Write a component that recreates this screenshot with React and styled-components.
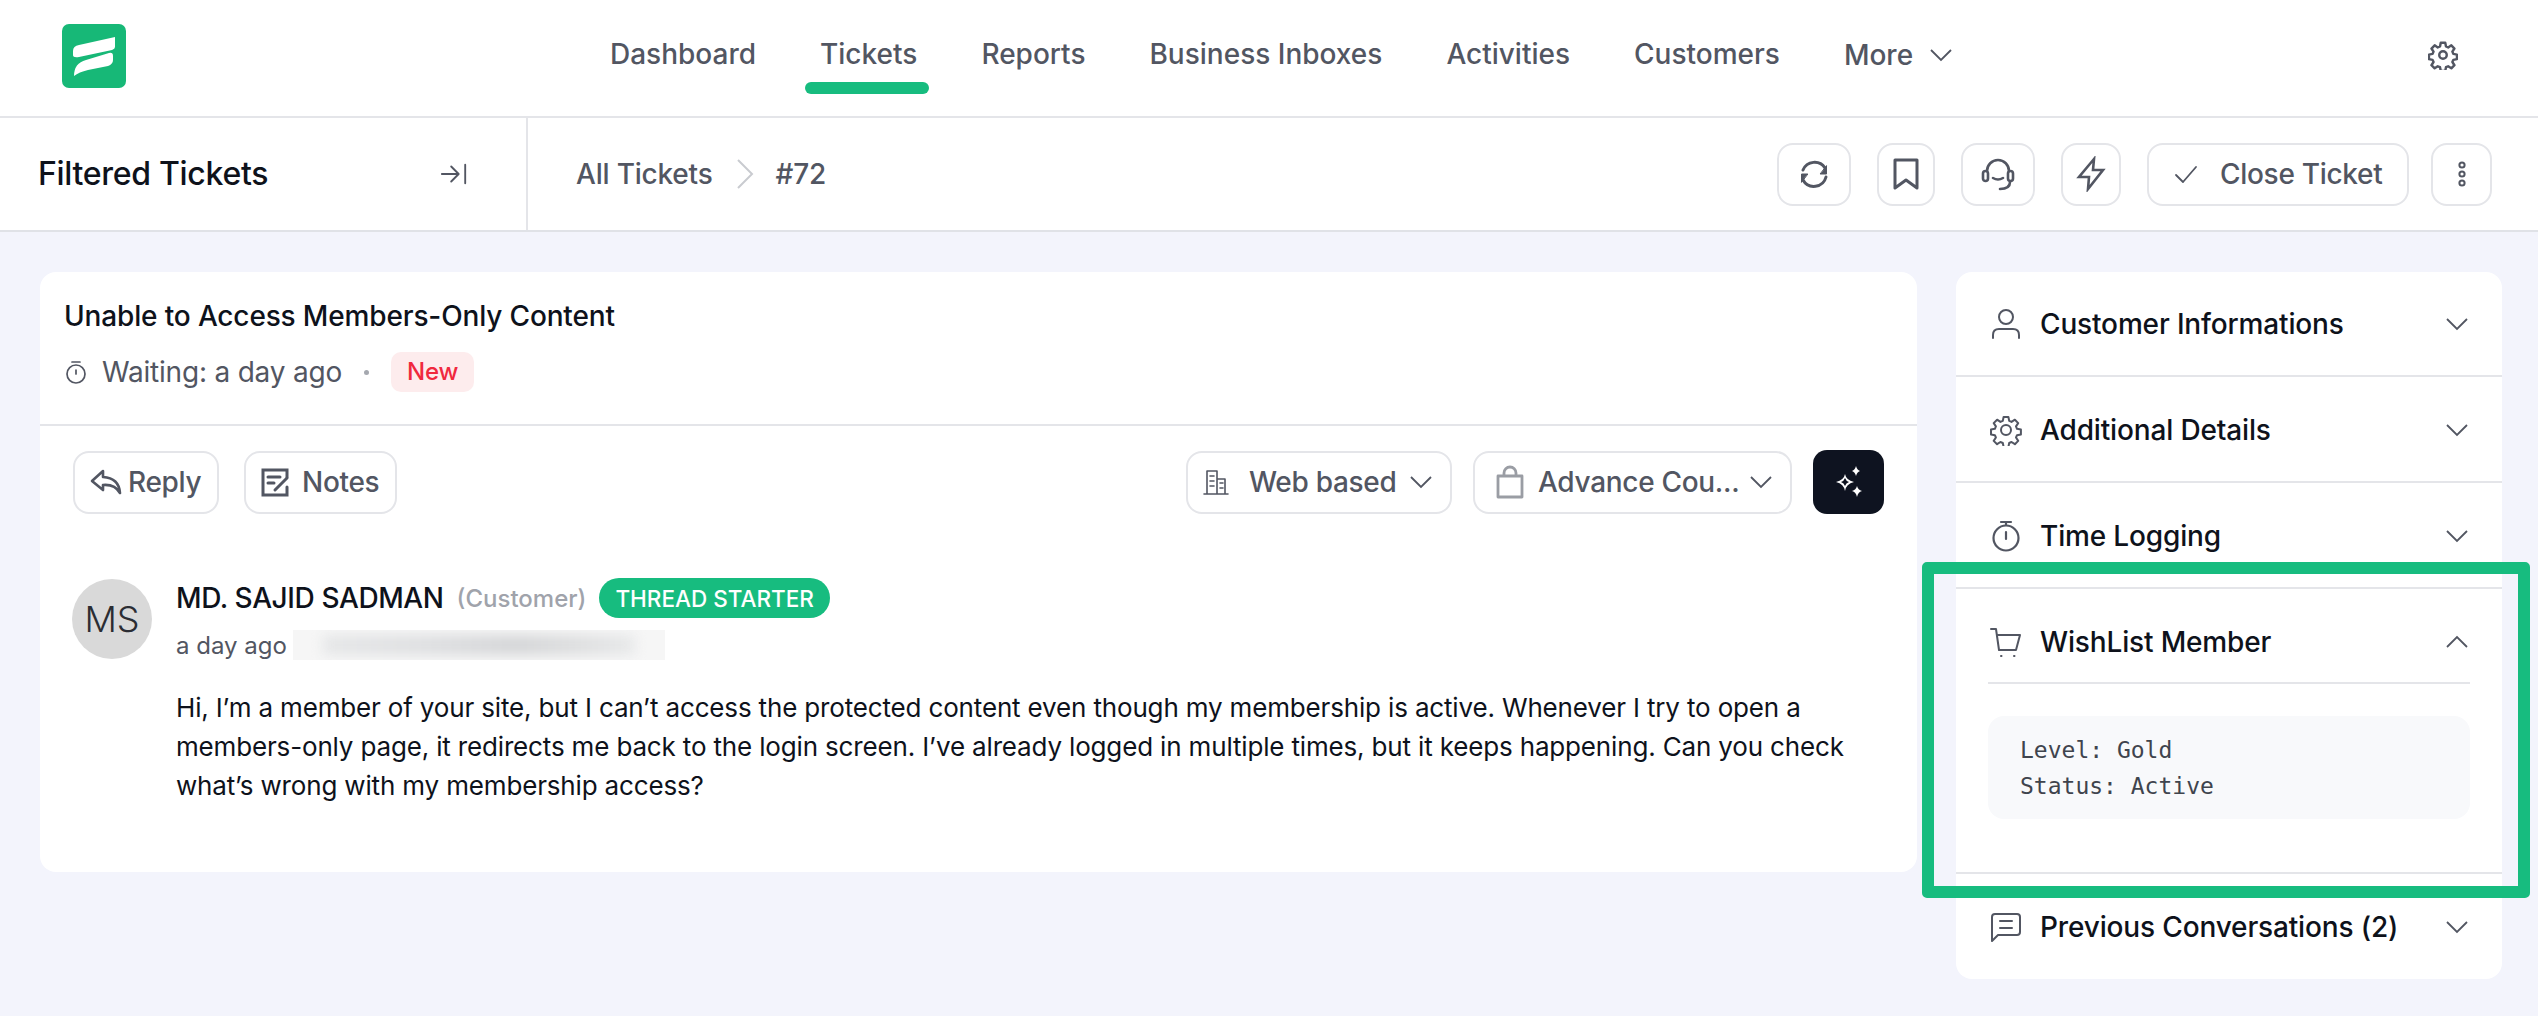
import React from "react";
import styled, { createGlobalStyle } from "styled-components";

const GlobalStyle = createGlobalStyle`
  *, *::before, *::after { box-sizing: border-box; margin: 0; padding: 0; }
  html, body { background: #f3f4fc; font-family: Inter, "Noto Sans", sans-serif; }
  #root { min-height: 1016px; }
`;

const Line = "#e4e5e9";
const Slate = "#525662";

const Page = styled.div`
  width: 2538px;
  height: 1016px;
  overflow: hidden;
  background: #f3f4fc;
`;

const TopNav = styled.header`
  height: 118px;
  background: #fff;
  border-bottom: 2px solid ${Line};
  display: flex;
  align-items: flex-start;
  padding-left: 62px;
`;

const Logo = styled.svg`
  width: 64px;
  height: 64px;
  margin-top: 24px;
  flex: none;
`;

const NavList = styled.nav`
  display: flex;
  margin-left: 468px;
  height: 116px;
`;

const NavItem = styled.a`
  position: relative;
  display: flex;
  align-items: center;
  gap: 17px;
  height: 108px;
  padding: 0 16px;
  margin-right: 32px;
  font-size: 28px;
  font-weight: 500;
  color: ${Slate};
  &::after {
    content: "";
    display: ${(p) => (p.$active ? "block" : "none")};
    position: absolute;
    left: 1px;
    right: 4px;
    top: 82px;
    height: 12px;
    border-radius: 6px;
    background: #17bc7f;
  }
`;

const MoreItem = styled(NavItem)`
  padding-top: 2px;
`;

const GearLink = styled.a`
  margin-left: auto;
  margin-right: 80px;
  margin-top: 40px;
  color: ${Slate};
  display: flex;
`;

const SubBar = styled.div`
  height: 114px;
  background: #fff;
  border-bottom: 2px solid #e0e2e7;
  display: flex;
`;

const FilterPane = styled.div`
  width: 528px;
  flex: none;
  border-right: 2px solid ${Line};
  display: flex;
  align-items: center;
  justify-content: space-between;
  padding: 0 58px 0 38px;
  color: ${Slate};
`;

const FilterTitle = styled.h2`
  font-size: 32px;
  line-height: 40px;
  font-weight: 500;
  letter-spacing: -0.3px;
  color: #0e121b;
`;

const Crumbs = styled.div`
  flex: 1;
  display: flex;
  align-items: center;
  padding-left: 48px;
  font-size: 28px;
  font-weight: 500;
  letter-spacing: -0.2px;
  color: ${Slate};
  gap: 24px;
`;

const CrumbSep = styled.svg`
  width: 20px;
  height: 32px;
  margin: 0 -3px 0 -2px;
  color: #c9cbd0;
`;

const Actions = styled.div`
  display: flex;
  align-items: center;
  gap: 26px;
  padding-right: 46px;
`;

const IconButton = styled.button`
  width: ${(p) => p.$w}px;
  height: 63px;
  border: 2px solid ${Line};
  border-radius: 16px;
  background: #fff;
  color: ${Slate};
  display: flex;
  align-items: center;
  justify-content: center;
  font: inherit;
`;

const CloseButton = styled(IconButton)`
  font-size: 28px;
  font-weight: 500;
  letter-spacing: -0.3px;
  gap: 22px;
  justify-content: flex-start;
  padding-left: 25px;
`;

const DotsButton = styled(IconButton)`
  margin-left: -4px;
`;

const Content = styled.main`
  display: flex;
  align-items: flex-start;
  padding: 40px 36px 0 40px;
  gap: 39px;
`;

const TicketCard = styled.section`
  width: 1877px;
  height: 600px;
  flex: none;
  background: #fff;
  border-radius: 16px;
`;

const TicketHead = styled.div`
  height: 154px;
  border-bottom: 2px solid ${Line};
  padding: 25px 24px 0;
`;

const TicketTitle = styled.h1`
  font-size: 28px;
  line-height: 38px;
  font-weight: 500;
  letter-spacing: -0.15px;
  color: #0e121b;
`;

const MetaRow = styled.div`
  display: flex;
  align-items: center;
  margin-top: 17px;
  font-size: 28px;
  line-height: 40px;
  letter-spacing: -0.2px;
  color: ${Slate};
`;

const MetaText = styled.span`
  margin-left: 14px;
`;

const MetaDot = styled.span`
  width: 5px;
  height: 5px;
  border-radius: 50%;
  background: #a5a8af;
  margin: 0 22px;
`;

const NewBadge = styled.span`
  height: 40px;
  padding: 0 16px;
  border-radius: 10px;
  background: #fdeced;
  color: #f0293e;
  font-size: 24px;
  font-weight: 500;
  display: flex;
  align-items: center;
`;

const ToolRow = styled.div`
  display: flex;
  align-items: center;
  padding: 24px 33px 0;
  gap: 25px;
`;

const Pill = styled.button`
  height: 63px;
  width: ${(p) => p.$w}px;
  border: 2px solid ${Line};
  border-radius: 16px;
  background: #fff;
  color: ${Slate};
  font: inherit;
  font-size: 28px;
  font-weight: 500;
  letter-spacing: -0.3px;
  display: flex;
  align-items: center;
  gap: ${(p) => p.$gap || 8}px;
  padding-left: ${(p) => p.$pad || 16}px;
  white-space: nowrap;
`;

const PillLabel = styled.span`
  margin-left: ${(p) => p.$ml || 0}px;
`;

const Spacer = styled.div`
  flex: 1;
`;

const SelectRow = styled.div`
  display: flex;
  align-items: center;
  gap: 21px;
`;

const SparkButton = styled.button`
  width: 71px;
  height: 64px;
  border: none;
  border-radius: 14px;
  background: #0e1320;
  display: flex;
  align-items: center;
  justify-content: center;
`;

const Message = styled.article`
  display: flex;
  gap: 24px;
  padding: 65px 32px 0;
`;

const Avatar = styled.div`
  width: 80px;
  height: 80px;
  flex: none;
  border-radius: 50%;
  background: #d9d9d9;
  color: #2b2d33;
  font-size: 36px;
  font-weight: 300;
  display: flex;
  align-items: center;
  justify-content: center;
`;

const MessageBody = styled.div`
  flex: 1;
`;

const NameRow = styled.div`
  display: flex;
  align-items: center;
  height: 40px;
  margin-top: -1px;
`;

const Name = styled.span`
  font-size: 28px;
  font-weight: 500;
  letter-spacing: -0.4px;
  color: #0e121b;
`;

const Role = styled.span`
  font-size: 24px;
  font-weight: 500;
  color: #a0a3ab;
  margin-left: 13px;
`;

const StarterBadge = styled.span`
  height: 40px;
  margin-left: 13px;
  padding: 0 16px;
  border-radius: 20px;
  background: #17bc7f;
  color: #fff;
  font-size: 22.5px;
  font-weight: 500;
  display: flex;
  align-items: center;
`;

const SubRow = styled.div`
  display: flex;
  align-items: center;
  height: 32px;
  margin-top: 11px;
  font-size: 24px;
  color: ${Slate};
`;

const BlurredEmail = styled.div`
  width: 372px;
  height: 30px;
  margin-left: 6px;
  background: #f6f6f6;
  overflow: hidden;
  display: flex;
  align-items: center;
  padding: 0 30px;
`;

const BlurStripe = styled.div`
  flex: 1;
  height: 20px;
  background: linear-gradient(90deg, #e6e7e8, #dfe0e2 30%, #d5d6d8 62%, #dddedf 80%, #e8e9ea);
  filter: blur(6px);
`;

const BodyText = styled.p`
  margin-top: 27px;
  width: 1690px;
  font-size: 26px;
  line-height: 39px;
  letter-spacing: -0.16px;
  color: #0e121b;
`;

const SidePanel = styled.aside`
  position: relative;
  width: 546px;
  height: 707px;
  flex: none;
  background: #fff;
  border-radius: 16px;
`;

const Section = styled.div`
  height: ${(p) => p.$h}px;
  border-bottom: ${(p) => (p.$last ? "none" : `2px solid ${Line}`)};
  padding: 0 32px;
`;

const SectionHead = styled.div`
  height: ${(p) => p.$h || 104}px;
  display: flex;
  align-items: center;
  color: #0e121b;
  font-size: 28px;
  font-weight: 500;
  letter-spacing: -0.15px;
  gap: 18px;
`;

const SectionIcon = styled.span`
  width: 32px;
  height: 36px;
  margin-left: 2px;
  display: flex;
  align-items: center;
  justify-content: center;
  color: ${Slate};
  flex: none;
`;

const SectionChevron = styled.svg`
  width: 22px;
  height: 14px;
  margin-left: auto;
  margin-right: 2px;
  color: ${Slate};
`;

const WishHead = styled(SectionHead)`
  border-bottom: 2px solid ${Line};
  padding-top: 12px;
`;

const CodeBox = styled.pre`
  margin-top: 32px;
  height: 103px;
  padding: 16px 32px;
  border-radius: 16px;
  background: #f8f9fb;
  font-family: "DejaVu Sans Mono", "Liberation Mono", monospace;
  font-size: 23px;
  line-height: 36px;
  color: #3f444d;
`;

const Highlight = styled.div`
  position: absolute;
  left: -34px;
  right: -28px;
  top: 290px;
  height: 336px;
  border: 12px solid #17bc7f;
  border-radius: 5px;
  pointer-events: none;
`;

const Stroke = ({ size = 32, w = 2, children, vb = 32 }) => (
  <svg width={size} height={size} viewBox={`0 0 ${vb} ${vb}`} fill="none" stroke="currentColor" strokeWidth={w} strokeLinecap="round" strokeLinejoin="round">
    {children}
  </svg>
);

const Chevron = ({ up }) => (
  <SectionChevron viewBox="0 0 22 14" fill="none" stroke="currentColor" strokeWidth="1.8">
    <path d={up ? "M1 12 L11 2 L21 12" : "M1 2 L11 12 L21 2"} />
  </SectionChevron>
);

const SmallChevron = () => (
  <svg width="22" height="14" viewBox="0 0 22 14" fill="none" stroke="currentColor" strokeWidth="1.8">
    <path d="M1 2 L11 12 L21 2" />
  </svg>
);

const GearPath = "M13.6 3h4.8l.8 3.9 2.3 1 3.4-2.2 3.3 3.4-2.2 3.3 1 2.4 3.9.8v4.8l-3.9.8-1 2.3 2.2 3.4-3.3 3.3-3.4-2.2-2.3 1-.8 3.9h-4.8l-.8-3.9-2.4-1-3.3 2.2-3.4-3.3 2.2-3.4-1-2.3-3.9-.8v-4.8l3.9-.8 1-2.4-2.2-3.3 3.4-3.4 3.3 2.2 2.4-1z";

function App() {
  return (
    <Page>
      <GlobalStyle />
      <TopNav>
        <Logo viewBox="0 0 64 64">
          <rect width="64" height="64" rx="7" fill="#17b877" />
          <path d="M11 27 Q11 22 17 21 L53 13 L53 23 Q53 25 50 26 L17 33 Q11 34 11 31 Z" fill="#fff" />
          <path d="M12 52 Q12 39 24 36 L47 29 Q51 28 51 32 L51 36 Q51 40 46 42 L26 46 Q17 48 12 52 Z" fill="#fff" />
        </Logo>
        <NavList>
          <NavItem>Dashboard</NavItem>
          <NavItem $active>Tickets</NavItem>
          <NavItem>Reports</NavItem>
          <NavItem>Business Inboxes</NavItem>
          <NavItem>Activities</NavItem>
          <NavItem>Customers</NavItem>
          <MoreItem>
            More
            <SmallChevron />
          </MoreItem>
        </NavList>
        <GearLink>
          <Stroke size={30} vb={32} w={2.6}>
            <path d={GearPath} />
            <circle cx="16" cy="16" r="4" />
          </Stroke>
        </GearLink>
      </TopNav>

      <SubBar>
        <FilterPane>
          <FilterTitle>Filtered Tickets</FilterTitle>
          <Stroke size={28} w={2} vb={30}>
            <path d="M2 15 H19 M12 7 L20 15 L12 23" />
            <path d="M27 5 V25" />
          </Stroke>
        </FilterPane>
        <Crumbs>
          All Tickets
          <CrumbSep viewBox="0 0 20 32" fill="none" stroke="currentColor" strokeWidth="2">
            <path d="M3 2 L17 16 L3 30" />
          </CrumbSep>
          #72
          <Spacer />
          <Actions>
            <IconButton $w={74}>
              <Stroke size={34} vb={34} w={3}>
                <path d="M6 13 A12.5 12.5 0 0 1 28 11" />
                <path d="M29 20 A12.5 12.5 0 0 1 6 23" />
                <path d="M29.5 9 V17 H23.5 Z" fill="currentColor" strokeWidth="1" />
                <path d="M4.5 25 V17 H10.5 Z" fill="currentColor" strokeWidth="1" />
              </Stroke>
            </IconButton>
            <IconButton $w={58}>
              <Stroke size={34} vb={34} w={3}>
                <path d="M6 3 H28 V31 L17 23 L6 31 Z" />
              </Stroke>
            </IconButton>
            <IconButton $w={74}>
              <Stroke size={36} vb={36} w={2.6}>
                <path d="M7 15 A11 11 0 0 1 29 15" />
                <rect x="3" y="15" width="5" height="10" rx="2.5" />
                <rect x="28" y="15" width="5" height="10" rx="2.5" />
                <path d="M13 22 Q18 25 23 22" />
                <path d="M30 26 Q30 33 20 33" />
              </Stroke>
            </IconButton>
            <IconButton $w={60}>
              <Stroke size={36} vb={36} w={2.6}>
                <path d="M21 3 L6 21 H16 L15 33 L30 14 H20 Z" strokeLinejoin="miter" />
              </Stroke>
            </IconButton>
            <CloseButton $w={262}>
              <Stroke size={24} vb={24} w={1.8}>
                <path d="M2 13 L9 20 L22 5" />
              </Stroke>
              Close Ticket
            </CloseButton>
            <DotsButton $w={61}>
              <Stroke size={30} vb={30} w={2}>
                <circle cx="15" cy="6" r="2.6" />
                <circle cx="15" cy="15" r="2.6" />
                <circle cx="15" cy="24" r="2.6" />
              </Stroke>
            </DotsButton>
          </Actions>
        </Crumbs>
      </SubBar>

      <Content>
        <TicketCard>
          <TicketHead>
            <TicketTitle>Unable to Access Members-Only Content</TicketTitle>
            <MetaRow>
              <Stroke size={24} vb={24} w={1.7}>
                <circle cx="12" cy="14" r="9" />
                <path d="M8 2 H16 M12 10 V14" />
              </Stroke>
              <MetaText>Waiting: a day ago</MetaText>
              <MetaDot />
              <NewBadge>New</NewBadge>
            </MetaRow>
          </TicketHead>

          <ToolRow>
            <Pill $w={146} $pad={14} $gap={5}>
              <Stroke size={34} vb={34} w={2.6}>
                <path d="M14 6 L3 16 L14 25 V20 Q26 19 31 28 Q30 13 14 12 Z" />
              </Stroke>
              Reply
            </Pill>
            <Pill $w={153} $pad={14} $gap={12}>
              <Stroke size={30} vb={30} w={3}>
                <path d="M27 10 V3 H3 V28 H27 V20" strokeLinejoin="miter" />
                <path d="M8 10 H20 M8 16 H14 M15 23 L27 11" />
              </Stroke>
              Notes
            </Pill>
            <Spacer />
            <SelectRow>
              <Pill $w={266} $pad={14} $gap={13}>
                <Stroke size={28} vb={28} w={1.6}>
                  <path d="M2 26 H26 M5 26 V3 H15 V26 M15 11 H23 V26 M8 8 H12 M8 13 H12 M8 18 H12 M18 15 H21 M18 20 H21" />
                </Stroke>
                <PillLabel $ml={6}>Web based</PillLabel>
                <SmallChevron />
              </Pill>
              <Pill $w={319} $pad={18} $gap={11}>
                <svg width="34" height="34" viewBox="0 0 34 34" fill="none" stroke="#9a9da4" strokeWidth="2.8" strokeLinejoin="round">
                  <path d="M5 11 H29 V32 H5 Z M11 11 V8 A6 6 0 0 1 23 8 V11" />
                </svg>
                <PillLabel>Advance Cou...</PillLabel>
                <SmallChevron />
              </Pill>
              <SparkButton>
                <svg width="30" height="34" viewBox="0 0 30 34" fill="#fff">
                  <path d="M11 9 Q12 15 20 17 Q12 19 11 26 Q10 19 2 17 Q10 15 11 9 Z M11 13 Q10 16 7 17 Q10 18 11 21 Q12 18 15 17 Q12 16 11 13 Z" fillRule="evenodd" />
                  <path d="M22 1 Q23 5 26 6 Q23 7 22 11 Q21 7 18 6 Q21 5 22 1 Z" />
                  <path d="M23 21 Q24 25 28 26 Q24 27 23 32 Q22 27 18 26 Q22 25 23 21 Z" />
                </svg>
              </SparkButton>
            </SelectRow>
          </ToolRow>

          <Message>
            <Avatar>MS</Avatar>
            <MessageBody>
              <NameRow>
                <Name>MD. SAJID SADMAN</Name>
                <Role>(Customer)</Role>
                <StarterBadge>THREAD STARTER</StarterBadge>
              </NameRow>
              <SubRow>
                a day ago
                <BlurredEmail>
                  <BlurStripe />
                </BlurredEmail>
              </SubRow>
              <BodyText>
                Hi, I’m a member of your site, but I can’t access the protected content even though my membership is active. Whenever I try to open a members-only page, it redirects me back to the login screen. I’ve already logged in multiple times, but it keeps happening. Can you check what’s wrong with my membership access?
              </BodyText>
            </MessageBody>
          </Message>
        </TicketCard>

        <SidePanel>
          <Section $h={105}>
            <SectionHead>
              <SectionIcon>
                <Stroke size={32} vb={32} w={2}>
                  <circle cx="16" cy="9" r="7" />
                  <path d="M3 30 V27 Q3 21 9 21 H23 Q29 21 29 27 V30" />
                </Stroke>
              </SectionIcon>
              Customer Informations
              <Chevron />
            </SectionHead>
          </Section>
          <Section $h={106}>
            <SectionHead $h={106}>
              <SectionIcon>
                <Stroke size={32} vb={32} w={2}>
                  <path d={GearPath} />
                  <circle cx="16" cy="16" r="5" />
                </Stroke>
              </SectionIcon>
              Additional Details
              <Chevron />
            </SectionHead>
          </Section>
          <Section $h={106}>
            <SectionHead $h={106}>
              <SectionIcon>
                <Stroke size={32} vb={32} w={2.2}>
                  <circle cx="16" cy="18" r="12.5" />
                  <path d="M11 2 H21 M16 2 V5 M16 12 V19" />
                </Stroke>
              </SectionIcon>
              Time Logging
              <Chevron />
            </SectionHead>
          </Section>
          <Section $h={285}>
            <WishHead $h={95}>
              <SectionIcon>
                <Stroke size={32} vb={32} w={2}>
                  <path d="M1 3 H6 L9 24 H26 L30 9 H7" />
                  <path d="M11 30 H11.5 M24 30 H24.5" />
                </Stroke>
              </SectionIcon>
              WishList Member
              <Chevron up />
            </WishHead>
            <CodeBox>{"Level: Gold\nStatus: Active"}</CodeBox>
          </Section>
          <Section $h={105} $last>
            <SectionHead $h={106}>
              <SectionIcon>
                <Stroke size={32} vb={32} w={2}>
                  <path d="M2 30 V6 Q2 3 5 3 H27 Q30 3 30 6 V21 Q30 24 27 24 H8 Z" />
                  <path d="M10 10 H22 M10 17 H22" />
                </Stroke>
              </SectionIcon>
              Previous Conversations (2)
              <Chevron />
            </SectionHead>
          </Section>
          <Highlight />
        </SidePanel>
      </Content>
    </Page>
  );
}

export default App;
